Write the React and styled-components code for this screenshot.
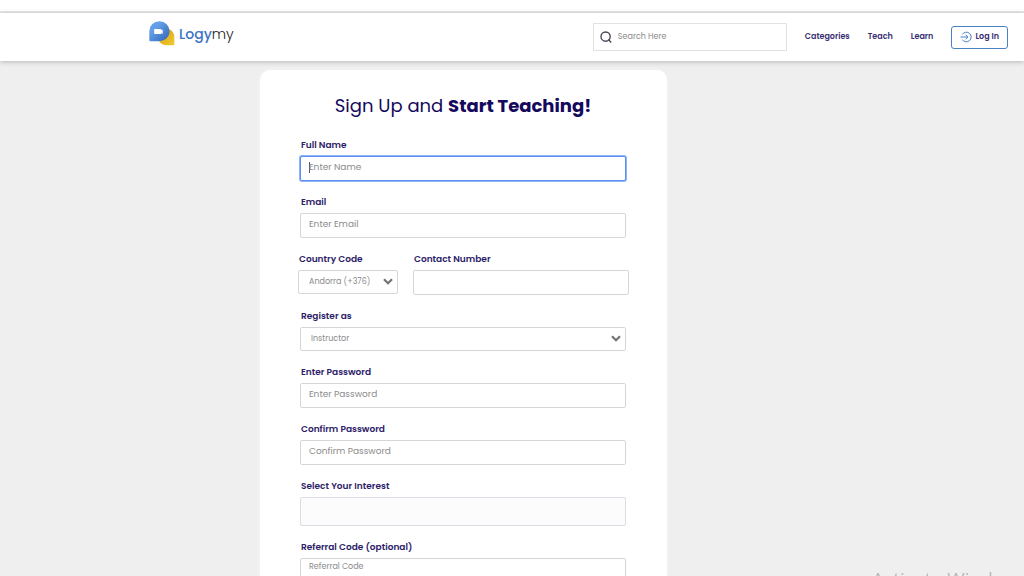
import React from 'react'
import styled, {createGlobalStyle} from 'styled-components'

function Field({id, label, children}) {
    return (
        <Group>
            <Label htmlFor={id}>{label}</Label>
            {children}
        </Group>
    )
}

function Dropdown({id, options, compact}) {
    return (
        <SelectWrapper>
            <Select id={id} $compact={compact}>
                {options.map((option) => (
                    <option key={option}>{option}</option>
                ))}
            </Select>
            <Chevron viewBox="0 0 10 7">
                <path d="M1 1.2 L5 5.2 L9 1.2" fill="none" stroke="#737373" strokeWidth="2.2" />
            </Chevron>
        </SelectWrapper>
    )
}

function Logo() {
    return (
        <LogoLink href="#home">
            <svg width="26" height="26" viewBox="0 0 26 26">
                <defs>
                    <linearGradient id="bubble" x1="0" y1="0" x2="1" y2="1">
                        <stop offset="0.3" stopColor="#659fe9" />
                        <stop offset="1" stopColor="#2f63b4" />
                    </linearGradient>
                    <linearGradient id="tail" x1="0" y1="0" x2="1" y2="1">
                        <stop offset="0.3" stopColor="#d9a91c" />
                        <stop offset="1" stopColor="#f3cb2e" />
                    </linearGradient>
                </defs>
                <path d="M17 7.500a8.300 8.300 0 0 1 8.300 8.300V23.300a1 1 0 0 1-1 1H17.500a8.500 8.500 0 0 1-8-6z" fill="url(#tail)" />
                <path d="M10.600 0.200a10 10 0 0 1 0 20H1.300a1 1 0 0 1-1-1V10.200A10.200 10 0 0 1 10.600 0.200z" fill="url(#bubble)" />
                <path d="M5.200 8h7v1.300l1.500-0.900v4.600l-1.500-0.900v1H5.200z" fill="#fff" />
            </svg>
            <LogoText><b>Logy</b>my</LogoText>
        </LogoLink>
    )
}

function Header() {
    return (
        <Bar>
            <Logo />
            <Search>
                <svg width="12" height="12" viewBox="0 0 12 12" fill="none" stroke="#4a4658" strokeWidth="1.4">
                    <circle cx="5.600" cy="5.600" r="4.600" />
                    <path d="M8.400 8.600 L11.200 11.400" />
                </svg>
                <SearchInput type="search" placeholder="Search Here" aria-label="Search" />
            </Search>
            <Nav>
                <NavLink href="#categories">Categories</NavLink>
                <NavLink href="#teach">Teach</NavLink>
                <NavLink href="#learn">Learn</NavLink>
            </Nav>
            <LoginBtn type="button">
                <svg width="12" height="12" viewBox="0 0 12 12" fill="none" stroke="#4a80c4" strokeWidth="1">
                    <path d="M2.300 3.400a4.800 4.800 0 1 1 0 5.200" />
                    <path d="M0.500 6h7.300M5.600 3.700L7.900 6L5.600 8.300" />
                </svg>
                Log In
            </LoginBtn>
        </Bar>
    )
}

function App() {
    return (
        <>
            <GlobalStyle />
            <TopStrip />
            <Header />
            <Main>
                <Card>
                    <Title>Sign Up and <b>Start Teaching!</b></Title>
                    <Field id="name" label="Full Name">
                        <Input id="name" type="text" placeholder="Enter Name" $active />
                    </Field>
                    <Field id="email" label="Email">
                        <Input id="email" type="email" placeholder="Enter Email" />
                    </Field>
                    <PhoneRow>
                        <Field id="code" label="Country Code">
                            <Dropdown id="code" options={['Andorra (+376)']} compact />
                        </Field>
                        <Field id="phone" label="Contact Number">
                            <Input id="phone" type="tel" />
                        </Field>
                    </PhoneRow>
                    <Field id="role" label="Register as">
                        <Dropdown id="role" options={['Instructor', 'Student']} />
                    </Field>
                    <Field id="password" label="Enter Password">
                        <Input id="password" type="password" placeholder="Enter Password" />
                    </Field>
                    <Field id="confirm" label="Confirm Password">
                        <Input id="confirm" type="password" placeholder="Confirm Password" />
                    </Field>
                    <Field id="interest" label="Select Your Interest">
                        <InterestInput id="interest" type="text" />
                    </Field>
                    <Field id="referral" label="Referral Code (optional)">
                        <ReferralInput id="referral" type="text" placeholder="Referral Code" />
                    </Field>
                </Card>
            </Main>
            <Watermark>Activate Windows</Watermark>
        </>
    )
}

export default App

const GlobalStyle = createGlobalStyle`
    * {
        box-sizing: border-box;
    }
    html {
        scrollbar-width: none;
    }
    body {
        margin: 0;
        background: #efefef;
        color: #14095c;
        font-family: Poppins, Inter, "Liberation Sans", sans-serif;
    }
    input, select, button {
        font-family: inherit;
    }
`

const TopStrip = styled.div`
    height: 13px;
    background: #fff;
    border-bottom: 2px solid #e8e8e8;
`

const Bar = styled.header`
    position: relative;
    display: flex;
    align-items: center;
    height: 48px;
    padding: 0 16px 0 149px;
    background: #fff;
    box-shadow: 0 1px 5px rgba(0, 0, 0, 0.24);
`

const LogoLink = styled.a`
    display: flex;
    align-items: center;
    gap: 4px;
    margin-right: auto;
    padding-bottom: 6px;
    text-decoration: none;
`

const LogoText = styled.span`
    font-size: 14px;
    line-height: 20px;
    font-weight: 300;
    color: #222;

    b {
        font-weight: 500;
        color: #3b74c6;
    }
`

const Search = styled.label`
    display: flex;
    align-items: center;
    gap: 6px;
    width: 194px;
    height: 28px;
    padding: 0 6px;
    border: 1px solid #e2e2e2;
`

const SearchInput = styled.input`
    flex: 1;
    min-width: 0;
    padding: 0;
    border: 0;
    outline: 0;
    background: none;
    font-size: 8px;

    &::placeholder {
        color: #8b8b8b;
    }
`

const Nav = styled.nav`
    display: flex;
    gap: 18px;
    margin: 0 18px;
`

const NavLink = styled.a`
    color: #3a2f73;
    font-size: 8px;
    font-weight: 600;
    line-height: 12px;
    text-decoration: none;
`

const LoginBtn = styled.button`
    display: flex;
    align-items: center;
    gap: 3px;
    height: 23px;
    padding: 0 8px;
    border: 1px solid #4a80c4;
    border-radius: 3px;
    background: #fff;
    color: #3a2f73;
    font-size: 8px;
    font-weight: 600;
`

const Main = styled.main`
    display: grid;
    grid-template-columns: 260fr 407px 357fr;
    padding: 9px 0 40px;
`

const Card = styled.form`
    grid-column: 2;
    display: flex;
    flex-direction: column;
    gap: 14px;
    padding: 21px 41px 40px 40px;
    border-radius: 10px;
    background: #fff;
    box-shadow: 0 0 6px rgba(255, 255, 255, 0.3);
`

const Title = styled.h1`
    margin: 0 0 3px;
    font-size: 18px;
    line-height: 30px;
    font-weight: 400;
    text-align: center;
    white-space: nowrap;

    b {
        font-weight: 700;
    }
`

const Group = styled.div`
    display: flex;
    flex-direction: column;
    gap: 4px;
`

const PhoneRow = styled.div`
    display: grid;
    grid-template-columns: 100px 1fr;
    gap: 15px;
    margin: 0 -3px 0 -2px;
`

const Label = styled.label`
    padding-left: 1px;
    font-size: 9px;
    line-height: 14px;
    font-weight: 600;
    color: #2c2168;
`

const Input = styled.input`
    width: 100%;
    height: 25px;
    padding: 0 8px 2px;
    border: 1px solid ${(props) => (props.$active ? '#5b8ff0' : '#d6d6d6')};
    border-radius: 2px;
    outline: 0;
    background: ${(props) => (props.$active ? 'linear-gradient(#555, #555) 8px 5px / 1px 11px no-repeat #fff' : '#fff')};
    box-shadow: ${(props) => (props.$active ? '0 0 0 1px #8fb4f7' : 'none')};
    color: #555;
    font-size: 9px;

    &::placeholder {
        color: #8b8b8b;
    }
`

const InterestInput = styled(Input)`
    height: 29px;
    border-color: #dcdce5;
    background: #fcfcfd;
`

const ReferralInput = styled(Input)`
    height: 20px;
    font-size: 8px;
`

const SelectWrapper = styled.div`
    position: relative;
`

const Select = styled.select`
    display: block;
    appearance: none;
    width: 100%;
    height: 24px;
    padding: 0 ${(props) => (props.$compact ? '20px' : '24px')} 1px 10px;
    border: 1px solid #d6d6d6;
    border-radius: 2px;
    background: #fff;
    color: #8b8b8b;
    font-size: 8px;
`

const Chevron = styled.svg`
    position: absolute;
    top: 8px;
    right: 5px;
    width: 10px;
    height: 7px;
    pointer-events: none;
`

const Watermark = styled.div`
    position: fixed;
    right: -4px;
    bottom: -15px;
    color: #b9b9b9;
    font-family: "Open Sans", sans-serif;
    font-size: 19px;
    line-height: 24px;
    pointer-events: none;
`
